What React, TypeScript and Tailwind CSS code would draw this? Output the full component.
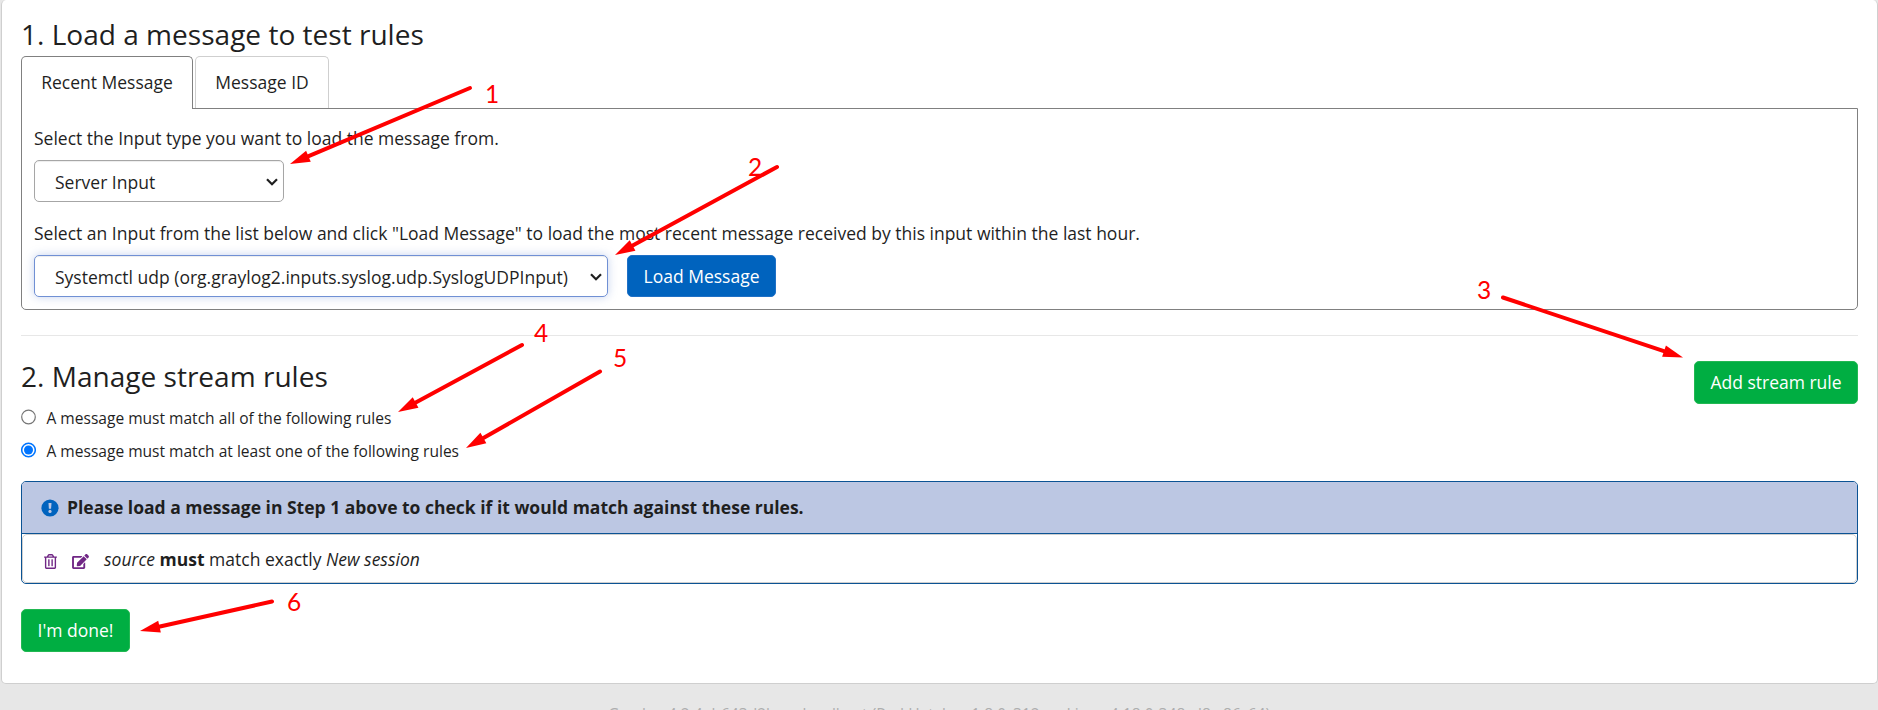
import React from "react";

type Arrow = { from: [number, number]; to: [number, number]; label: string; at: [number, number] };

const arrows: Arrow[] = [
  { from: [470, 88], to: [290, 164], label: "1", at: [485, 103] },
  { from: [777, 167], to: [615, 255], label: "2", at: [748, 175.5] },
  { from: [1503, 297.5], to: [1683, 357.5], label: "3", at: [1477, 299] },
  { from: [522, 345], to: [398, 412], label: "4", at: [534, 342] },
  { from: [600, 371.5], to: [466, 448], label: "5", at: [613, 367] },
  { from: [272, 601.5], to: [140, 631], label: "6", at: [287, 611] },
];

function Annotations() {
  return (
    <svg className="pointer-events-none absolute inset-0" width="1878" height="710" viewBox="0 0 1878 710">
      {arrows.map(({ from, to, label, at }) => {
        const dx = to[0] - from[0];
        const dy = to[1] - from[1];
        const len = Math.hypot(dx, dy);
        const ux = dx / len;
        const uy = dy / len;
        const bx = to[0] - ux * 20;
        const by = to[1] - uy * 20;
        return (
          <g key={label} fill="#ff0000">
            <line x1={from[0]} y1={from[1]} x2={bx + ux * 3} y2={by + uy * 3} stroke="#ff0000" strokeWidth="4" strokeLinecap="round" />
            <polygon points={`${to[0]},${to[1]} ${bx - uy * 6},${by + ux * 6} ${bx + uy * 6},${by - ux * 6}`} />
            <text x={at[0]} y={at[1]} fontSize="24.5" className="font-['Lato',sans-serif]">{label}</text>
          </g>
        );
      })}
    </svg>
  );
}

function Chevron() {
  return (
    <svg className="mt-px" width="12" height="8" viewBox="0 0 12 8" fill="none" stroke="#1f1f1f" strokeWidth="2.2">
      <path d="M1 1.2 L6 6.2 L11 1.2" />
    </svg>
  );
}

function Radio({ checked, label }: { checked: boolean; label: string }) {
  return (
    <label className="flex h-[33px] items-start">
      <svg className="mt-px shrink-0" width="15" height="16" viewBox="0 0 15 16">
        <circle cx="7.5" cy="8" r="6.8" fill="#fff" stroke={checked ? "#0075ff" : "#767676"} strokeWidth={checked ? 1.5 : 1.2} />
        {checked && <circle cx="7.5" cy="8" r="4.5" fill="#0075ff" />}
      </svg>
      <span className="ml-[10.5px] text-[15.55px] leading-[20px]">{label}</span>
    </label>
  );
}

export default function App() {
  return (
    <div className="relative h-[710px] w-[1878px] overflow-hidden bg-[#e7e7e7] font-['Open_Sans',sans-serif] text-[17.5px] leading-[25px] text-[#1f1f1f]">
      <main className="ml-px h-[684px] w-[1877px] rounded-[5px] border border-t-0 border-[#cfcfcf] bg-white pr-[19px] pl-[19px]">
        <h2 className="pt-[19px] text-[28.06px] leading-[31px]">1. Load a message to test rules</h2>

        <div className="mt-[6px] flex items-end">
          <div className="z-10 -mb-px h-[53px] w-[172px] rounded-t-[5px] border border-b-0 border-[#808080] bg-white pt-[13px] text-center">Recent Message</div>
          <div className="ml-[2px] h-[52px] w-[134px] rounded-t-[5px] border border-b-0 border-[#cfcfcf] pt-[13px] text-center">Message ID</div>
        </div>
        <section className="h-[202px] rounded-b-[5px] border border-[#808080] px-3 pt-[17px]">
          <p>Select the Input type you want to load the message from.</p>
          <div className="mt-[9px] flex h-[42px] w-[250px] items-center justify-between rounded-[5px] border border-[#a6a6a6] pr-[5px] pl-5 shadow-[inset_0_1px_1px_rgba(0,0,0,0.075)]">
            <span className="pt-[2px]">Server Input</span>
            <Chevron />
          </div>
          <p className="mt-[19px]">Select an Input from the list below and click "Load Message" to load the most recent message received by this input within the last hour.</p>
          <div className="mt-[9px] flex">
            <div className="flex h-[42px] w-[574px] items-center justify-between rounded-[5px] border border-[#7090d4] pr-[5px] pl-5 shadow-[inset_0_1px_1px_rgba(0,0,0,0.075),0_0_10px_rgba(112,144,212,0.4)]">
              <span className="pt-[2px]">Systemctl udp (org.graylog2.inputs.syslog.udp.SyslogUDPInput)</span>
              <Chevron />
            </div>
            <button className="ml-[19px] h-[42px] w-[149px] rounded-[5px] border border-[#1f70c6] bg-[#0063be] text-white">Load Message</button>
          </div>
        </section>

        <hr className="mt-[25px] border-[#e7e7e7]" />

        <div className="mt-[25px] flex justify-between">
          <div>
            <h2 className="text-[28.06px] leading-[31px]">2. Manage stream rules</h2>
            <div className="mt-[16px]">
              <Radio checked={false} label="A message must match all of the following rules" />
              <Radio checked label="A message must match at least one of the following rules" />
            </div>
          </div>
          <button className="h-[43px] w-[164px] rounded-[5px] border border-[#22b852] bg-[#00ae42] text-white">Add stream rule</button>
        </div>

        <section className="mt-[7px] h-[103px] overflow-hidden rounded-[5px] border border-[#0b5394] bg-white">
          <div className="flex h-[52px] items-center border-b border-[#0b5394] bg-[#bcc7e3] pl-[19px] font-bold">
            <svg width="18" height="18" viewBox="0 0 18 18">
              <circle cx="9" cy="9" r="8.6" fill="#0063be" />
              <path d="M7.5 4h3l-.4 5.700H7.900z" fill="#bcc7e3" />
              <circle cx="9" cy="12.4" r="1.6" fill="#bcc7e3" />
            </svg>
            <span className="ml-[8px]">Please load a message in Step 1 above to check if it would match against these rules.</span>
          </div>
          <div className="flex h-[49px] items-center rounded-[5px] border border-[#cfcfcf] pl-[21px]">
            <svg className="mt-[5px]" width="13" height="15" viewBox="0 0 448 512" fill="#702785">
              <path d="M268 416h24a12 12 0 0 0 12-12V188a12 12 0 0 0-12-12h-24a12 12 0 0 0-12 12v216a12 12 0 0 0 12 12zM432 80h-82.4l-34-56.7A48 48 0 0 0 274.400 0H173.600a48 48 0 0 0-41.200 23.300L98.400 80H16A16 16 0 0 0 0 96v16a16 16 0 0 0 16 16h16v336a48 48 0 0 0 48 48h288a48 48 0 0 0 48-48V128h16a16 16 0 0 0 16-16V96a16 16 0 0 0-16-16zM171.800 50.900A6 6 0 0 1 177 48h94a6 6 0 0 1 5.200 2.900L293.600 80H154.400zM368 464H80V128h288zM156 416h24a12 12 0 0 0 12-12V188a12 12 0 0 0-12-12h-24a12 12 0 0 0-12 12v216a12 12 0 0 0 12 12z" />
            </svg>
            <svg className="mt-[5px] ml-[15px]" width="17" height="15" viewBox="0 0 576 512" fill="#702785">
              <path d="M402.600 83.200l90.200 90.200c3.800 3.800 3.800 10 0 13.800L274.400 405.600l-92.800 10.300c-12.400 1.400-22.900-9.100-21.500-21.500l10.300-92.800L388.800 83.200c3.800-3.800 10-3.800 13.800 0zm162-22.900l-48.800-48.800c-15.200-15.200-39.900-15.200-55.200 0l-35.400 35.400c-3.800 3.800-3.800 10 0 13.800l90.200 90.200c3.800 3.800 10 3.800 13.800 0l35.400-35.400c15.200-15.300 15.200-40 0-55.200zM384 346.200V448H64V128h229.800c3.200 0 6.200-1.300 8.500-3.500l40-40c7.600-7.600 2.200-20.500-8.500-20.500H48C21.500 64 0 85.500 0 112v352c0 26.500 21.500 48 48 48h352c26.500 0 48-21.500 48-48V306.200c0-10.700-12.900-16-20.500-8.500l-40 40c-2.200 2.300-3.500 5.300-3.500 8.500z" />
            </svg>
            <span className="mt-[2px] ml-[15px]"><em>source</em> <strong>must</strong> match exactly <em>New session</em></span>
          </div>
        </section>

        <button className="mt-[25px] h-[43px] w-[109px] rounded-[5px] border border-[#22b852] bg-[#00ae42] text-white">I'm done!</button>
      </main>
      <footer className="mt-[19px] text-center text-[15.55px] leading-[22px] whitespace-nowrap text-[#aeaeae]">Graylog 4.2.4+b643d2b on localhost (Red Hat, Inc. 1.8.0_312 on Linux 4.18.0-348.el8.x86_64)</footer>
      <Annotations />
    </div>
  );
}
